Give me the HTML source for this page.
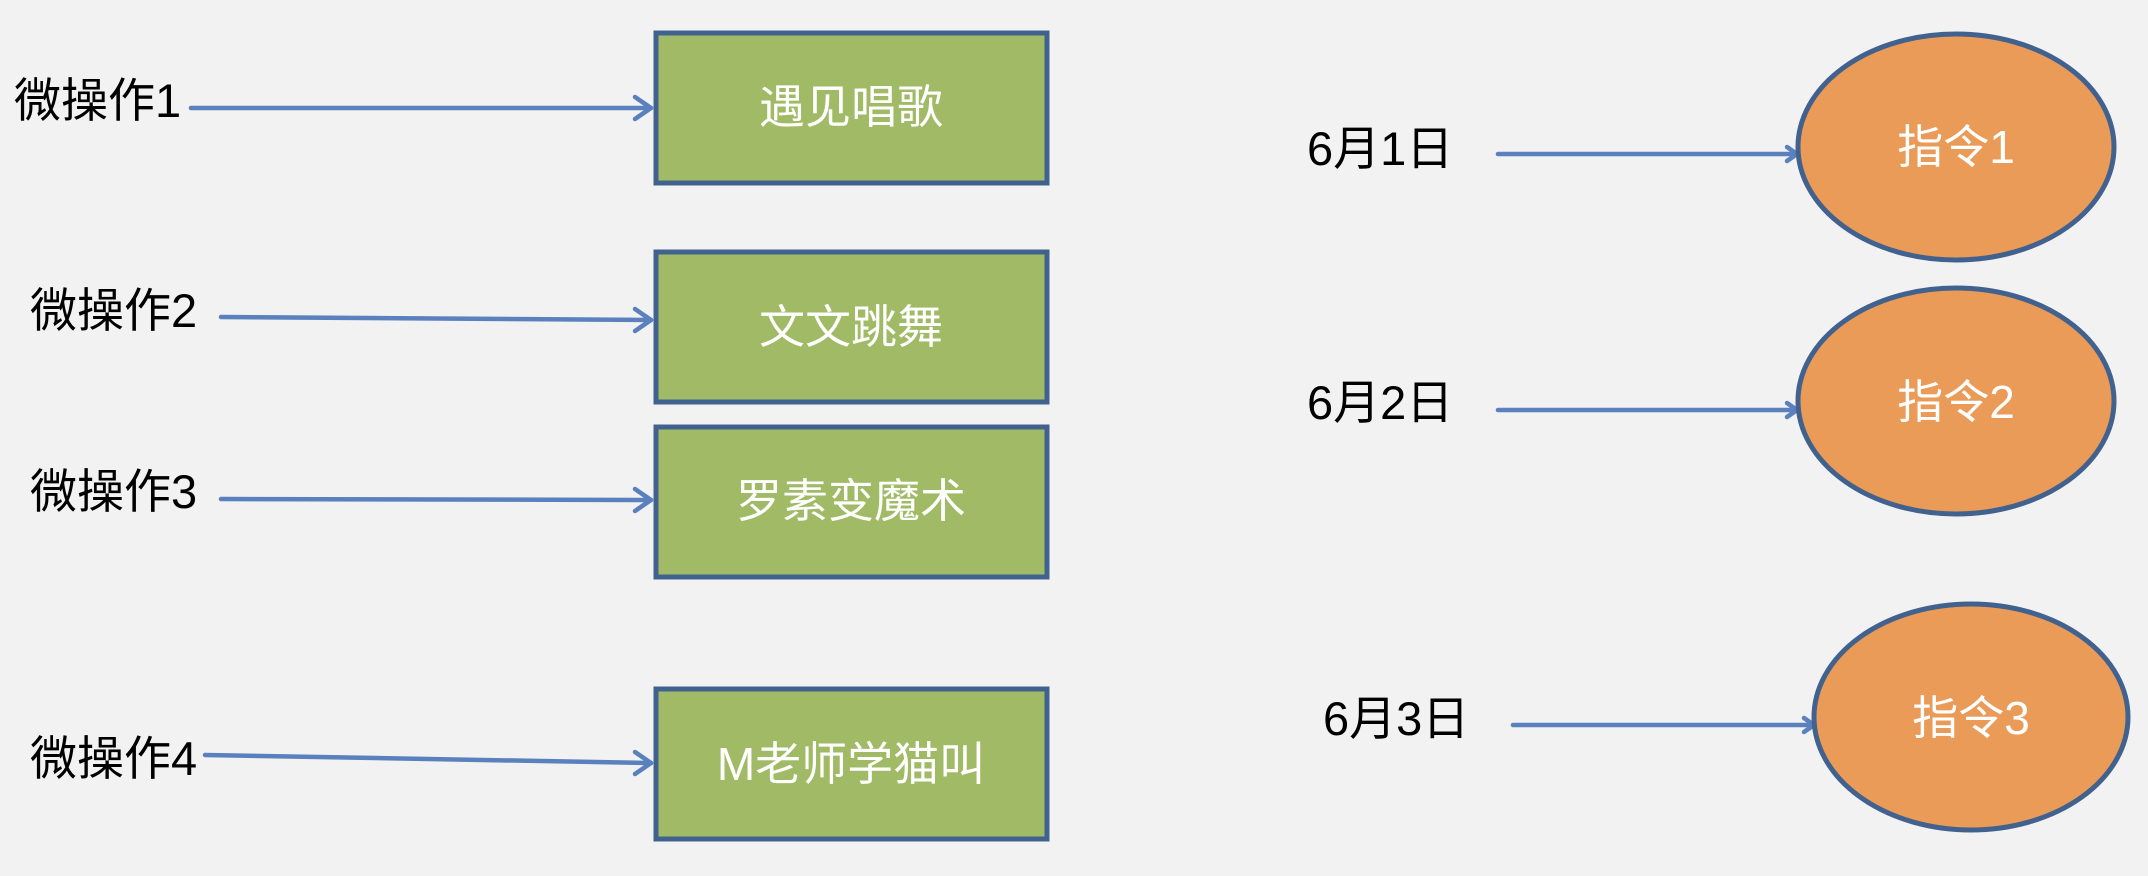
<!DOCTYPE html>
<html><head><meta charset="utf-8"><style>
html,body{margin:0;padding:0;background:#f2f2f2;}
svg{display:block}
text{font-family:"Liberation Sans","Noto Sans CJK SC",sans-serif;}
.l{font-size:47px;fill:#000}
.w{font-size:46px;fill:#fff;font-family:"Noto Serif CJK SC","Liberation Sans",serif}
</style></head><body>
<svg width="2148" height="876" viewBox="0 0 2148 876" xmlns="http://www.w3.org/2000/svg">
<rect width="2148" height="876" fill="#f2f2f2"/>
<g stroke="#5a80bd" stroke-width="4.5" fill="none" stroke-linecap="round" stroke-linejoin="round">
<line x1="191" y1="108" x2="651" y2="108"/><polyline points="635,97 651,108 635,119"/>
<line x1="221" y1="317" x2="651" y2="320"/><polyline points="635,309 651,320 635,331"/>
<line x1="221" y1="499" x2="651" y2="500"/><polyline points="635,489 651,500 635,511"/>
<line x1="205" y1="755" x2="651" y2="763"/><polyline points="635,752 651,763 635,774"/>
<line x1="1498" y1="154" x2="1797" y2="154"/><polyline points="1787,147 1797,154 1787,161"/>
<line x1="1498" y1="410" x2="1797" y2="410"/><polyline points="1787,403 1797,410 1787,417"/>
<line x1="1513" y1="725" x2="1814" y2="725"/><polyline points="1804,718 1814,725 1804,732"/>
</g>
<g fill="#a0ba65" stroke="#41618f" stroke-width="5">
<rect x="656" y="33" width="391" height="150"/>
<rect x="656" y="252" width="391" height="150"/>
<rect x="656" y="427" width="391" height="150"/>
<rect x="656" y="689" width="391" height="150"/>
</g>
<g fill="#e99b57" stroke="#41618f" stroke-width="5">
<ellipse cx="1956" cy="147" rx="158" ry="113"/>
<ellipse cx="1956" cy="401" rx="158" ry="113"/>
<ellipse cx="1971" cy="717" rx="157" ry="113"/>
</g>
<g class="l">
<text x="14" y="117">微操作1</text>
<text x="30" y="327">微操作2</text>
<text x="30" y="508">微操作3</text>
<text x="30" y="775">微操作4</text>
<text x="1307" y="165">6月1日</text>
<text x="1307" y="419">6月2日</text>
<text x="1323" y="735">6月3日</text>
</g>
<g class="w" text-anchor="middle">
<text x="851" y="123">遇见唱歌</text>
<text x="851" y="343">文文跳舞</text>
<text x="851" y="517">罗素变魔术</text>
<text x="851" y="780">M老师学猫叫</text>
<text x="1956" y="163">指令1</text>
<text x="1956" y="418">指令2</text>
<text x="1971" y="734">指令3</text>
</g>
</svg>
</body></html>
